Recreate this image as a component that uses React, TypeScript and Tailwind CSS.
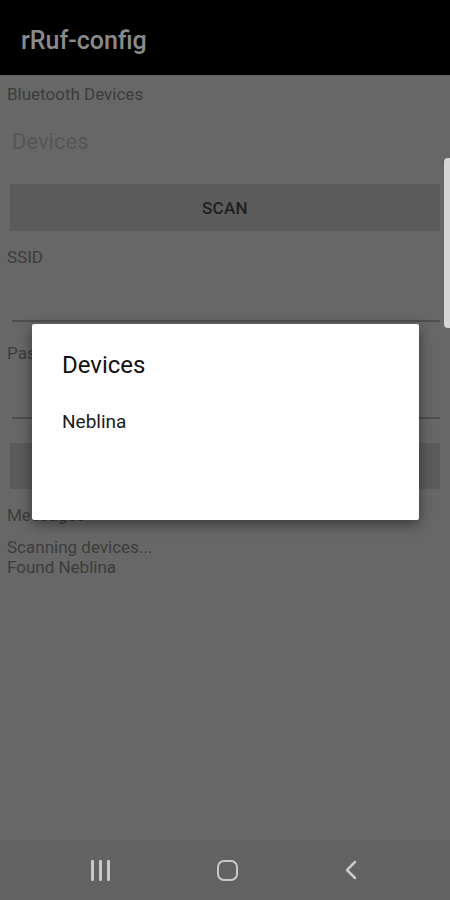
export default function App() {
  return (
    <div
      className="relative flex h-[900px] w-[450px] flex-col overflow-hidden bg-[#676767]"
      style={{ fontFamily: 'Roboto, "Noto Sans", sans-serif' }}
    >
      {/* toolbar */}
      <div className="h-[75px] shrink-0 bg-black pl-[21px] pt-[26px]">
        <div className="text-[25px] font-medium leading-[30px] text-[#8a8a8a]">rRuf-config</div>
      </div>

      {/* form */}
      <div className="flex flex-col">
        <div className="mt-[9px] pl-[7px] text-[17px] leading-[20px] text-[#3c3c3c]">Bluetooth Devices</div>
        <div className="mt-[25px] pl-[12px] text-[22px] leading-[26px] text-[#565656]">Devices</div>
        <div className="mx-[10px] mt-[29px] flex h-[47px] items-center justify-center bg-[#5b5b5b] text-[17px] font-medium leading-[20px] tracking-[0.3px] text-[#1f1f1f]">
          SCAN
        </div>
        <div className="mt-[16px] pl-[7px] text-[17px] leading-[20px] text-[#3c3c3c]">SSID</div>
        <div className="ml-[12px] mr-[10px] h-[55px] border-b-2 border-[#4e4e4e]" />
        <div className="mt-[21px] pl-[7px] text-[17px] leading-[20px] text-[#3c3c3c]">Password</div>
        <div className="ml-[12px] mr-[10px] h-[56px] border-b-2 border-[#4e4e4e]" />
        <div className="mx-[10px] mt-[24px] flex h-[46px] items-center justify-center bg-[#5b5b5b] text-[17px] font-medium leading-[20px] text-[#1f1f1f]">
          CONNECT
        </div>
        <div className="mt-[16px] pl-[7px] text-[17px] leading-[20px] text-[#3c3c3c]">Messages</div>
        <div className="mt-[12px] pl-[7px] text-[17px] leading-[20px] text-[#3c3c3c]">
          <div>Scanning devices...</div>
          <div>Found Neblina</div>
        </div>
      </div>

      {/* nav bar */}
      <div className="mt-auto flex h-[60px] shrink-0 items-center bg-[#626262]">
        <div className="ml-[91px] flex h-[21px] w-[19px] justify-between">
          <span className="h-full w-[3px] rounded-[1px] bg-[#c9c9c9]" />
          <span className="h-full w-[3px] rounded-[1px] bg-[#c9c9c9]" />
          <span className="h-full w-[3px] rounded-[1px] bg-[#c9c9c9]" />
        </div>
        <div className="ml-[107px] h-[21px] w-[21px] rounded-[7px] border-[2.5px] border-[#c9c9c9]" />
        <svg className="ml-[106px]" width="14" height="20" viewBox="0 0 14 20" fill="none">
          <path d="M11 2 L3 10 L11 18" stroke="#c9c9c9" strokeWidth="2.5" strokeLinecap="round" strokeLinejoin="round" />
        </svg>
      </div>

      {/* scrollbar */}
      <div className="absolute right-0 top-[158px] h-[170px] w-[6px] rounded-l-[4px] bg-[#d6d6d6]" />

      {/* dialog */}
      <div className="absolute left-[32px] top-[324px] h-[196px] w-[387px] rounded-[2px] bg-white pl-[30px] pt-[27px] shadow-[0_4px_14px_rgba(0,0,0,0.45)]">
        <div className="text-[24px] leading-[28px] text-[#111]">Devices</div>
        <div className="mt-[31px] text-[19px] leading-[24px] text-[#1a1a1a]">Neblina</div>
      </div>
    </div>
  )
}
